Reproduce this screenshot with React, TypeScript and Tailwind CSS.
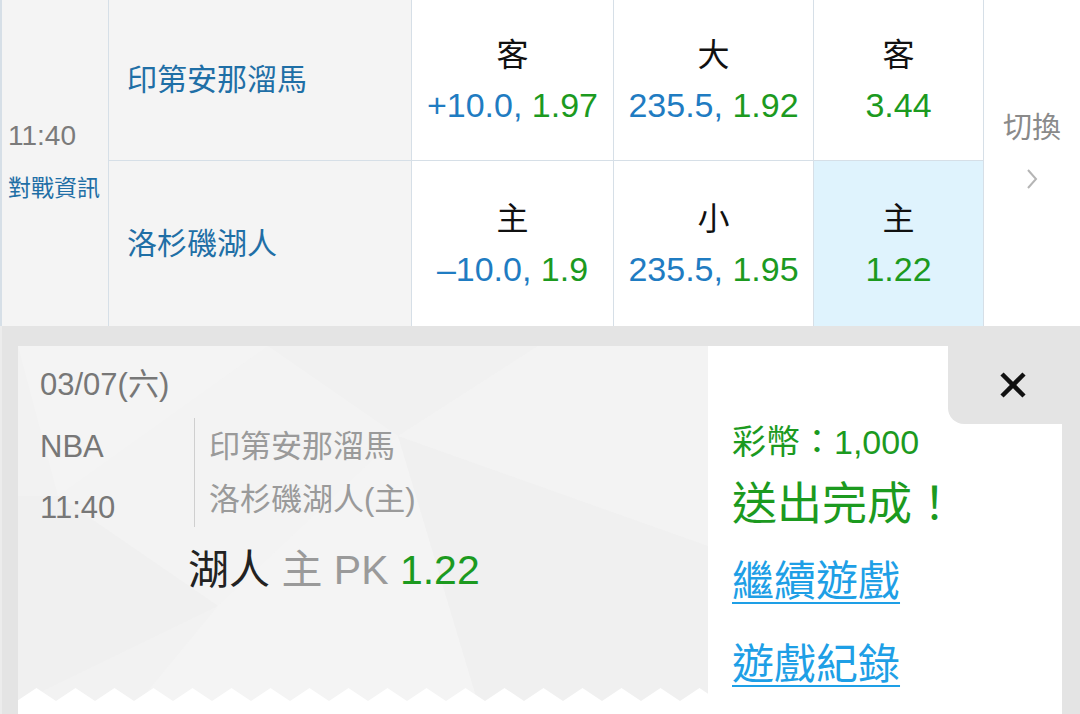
import React from 'react';

interface OddCell {
  label: string;
  line?: string;
  price: string;
  selected?: boolean;
}

interface MatchRow {
  team: string;
  cells: OddCell[];
}

const rows: MatchRow[] = [
  {
    team: '印第安那溜馬',
    cells: [
      { label: '客', line: '+10.0, ', price: '1.97' },
      { label: '大', line: '235.5, ', price: '1.92' },
      { label: '客', price: '3.44' },
    ],
  },
  {
    team: '洛杉磯湖人',
    cells: [
      { label: '主', line: '–10.0, ', price: '1.9' },
      { label: '小', line: '235.5, ', price: '1.95' },
      { label: '主', price: '1.22', selected: true },
    ],
  },
];

const cellWidths = ['w-[202px]', 'w-[200px]', 'w-[170px]'];

const CardPattern: React.FC = () => {
  // faint low-poly background + zigzag bottom edge of the ticket
  const zig = Array.from({ length: 19 }, (_, i) => {
    const x = i * 39 - 1;
    return `L${x},355 L${x + 19.5},342 L${x + 39},355`;
  }).join(' ');
  return (
    <svg className="absolute inset-0" width="690" height="357" viewBox="0 0 690 357">
      <rect width="690" height="357" fill="#f2f2f2" />
      <polygon points="0,0 250,0 40,150" fill="#f4f4f4" />
      <polygon points="250,0 520,0 380,90" fill="#f1f1f1" />
      <polygon points="40,150 250,0 380,90 200,260" fill="#f3f3f3" />
      <polygon points="0,150 40,150 200,260 0,357" fill="#f0f0f0" />
      <polygon points="200,260 380,90 460,357 120,357" fill="#f4f4f4" />
      <polygon points="380,90 520,0 690,0 690,200" fill="#f3f3f3" />
      <polygon points="380,90 690,200 690,357 460,357" fill="#f0f0f0" />
      <path d={`M-1,357 L-1,355 ${zig} L690,357 Z`} fill="#ffffff" />
    </svg>
  );
};

const App: React.FC = () => {
  return (
    <div className="w-[1080px] h-[714px] overflow-hidden bg-[#e4e4e4] font-['Liberation_Sans','Noto_Sans_CJK_TC',sans-serif]">
      {/* odds table */}
      <div className="flex h-[326px] bg-white">
        <div className="w-[109px] shrink-0 bg-[#f4f4f4] border-l-2 border-r border-[#d6dfe7] flex flex-col justify-center pl-[6px] pb-[6px]">
          <p className="text-[28px] leading-[34px] text-[#7b7b7b]">11:40</p>
          <p className="mt-[21px] text-[23px] leading-[28px] text-[#1f6fa6] whitespace-nowrap">對戰資訊</p>
        </div>

        <div className="w-[875px] shrink-0 flex flex-col">
          {rows.map((row, ri) => (
            <div
              key={row.team}
              className={`flex ${ri === 0 ? 'h-[161px] border-b border-[#d6dfe7]' : 'h-[165px]'}`}
            >
              <div className="w-[303px] shrink-0 bg-[#f4f4f4] border-r border-[#d6dfe7] flex items-center pl-[18px]">
                <span className="text-[30px] leading-[40px] text-[#1f6fa6]">{row.team}</span>
              </div>
              {row.cells.map((cell, ci) => (
                <div
                  key={ci}
                  className={`${cellWidths[ci]} shrink-0 border-r border-[#d6dfe7] flex flex-col items-center justify-center ${
                    cell.selected ? 'bg-[#dff3fd]' : 'bg-white'
                  }`}
                >
                  <span className="text-[32px] leading-[40px] text-[#111111]">{cell.label}</span>
                  <span className="mt-[10px] text-[34px] leading-[40px] whitespace-nowrap">
                    {cell.line && <span className="text-[#1f7cc2]">{cell.line}</span>}
                    <span className="text-[#1c9a1f]">{cell.price}</span>
                  </span>
                </div>
              ))}
            </div>
          ))}
        </div>

        <div className="flex-1 flex flex-col items-center justify-center pb-[26px] bg-white">
          <span className="text-[29px] leading-[34px] text-[#8a8a8a]">切換</span>
          <svg className="mt-[23px]" width="12" height="22" viewBox="0 0 12 22">
            <polyline points="2,2 10,11 2,20" fill="none" stroke="#b5b5b5" strokeWidth="2" />
          </svg>
        </div>
      </div>

      {/* bet confirmation card */}
      <div className="h-[388px] pt-[20px] pl-[16px] border-l-2 border-[#ececec] flex">
        <div className="w-[1044px] h-[368px] bg-white flex">
          <div className="w-[690px] h-[357px] shrink-0 relative overflow-hidden">
            <CardPattern />
            <div className="relative pl-[22px] pt-[21px]">
              <p className="text-[31px] leading-[36px] text-[#777777]">03/07(六)</p>
              <div className="mt-[15px] flex h-[109px]">
                <div className="w-[155px] shrink-0 border-r border-[#cfcfcf] pt-[11px]">
                  <p className="text-[31px] leading-[36px] text-[#777777]">NBA</p>
                  <p className="mt-[25px] text-[31px] leading-[36px] text-[#777777]">11:40</p>
                </div>
                <div className="pl-[14px] pt-[11px]">
                  <p className="text-[31px] leading-[36px] text-[#9a9a9a] whitespace-nowrap">印第安那溜馬</p>
                  <p className="mt-[17px] text-[31px] leading-[36px] text-[#9a9a9a] whitespace-nowrap">洛杉磯湖人(主)</p>
                </div>
              </div>
              <p className="mt-[20px] ml-[148px] text-[41px] leading-[46px] whitespace-nowrap">
                <span className="text-[#222222]">湖人 </span>
                <span className="text-[#9a9a9a]">主 PK </span>
                <span className="text-[#1c9a1f]">1.22</span>
              </p>
            </div>
          </div>

          <div className="flex-1 relative pl-[24px] pt-[76px]">
            <div className="absolute top-0 right-0 w-[114px] h-[78px] bg-[#e4e4e4] rounded-bl-[16px] flex items-center justify-center pl-[16px]">
              <svg width="28" height="28" viewBox="0 0 28 28">
                <line x1="3" y1="3" x2="25" y2="25" stroke="#111111" strokeWidth="4.5" />
                <line x1="25" y1="3" x2="3" y2="25" stroke="#111111" strokeWidth="4.5" />
              </svg>
            </div>
            <p className="text-[34px] leading-[40px] text-[#1c9a1f] whitespace-nowrap">彩幣：1,000</p>
            <p className="mt-[15px] text-[45px] leading-[56px] text-[#1c9a1f] whitespace-nowrap">送出完成！</p>
            <p className="mt-[24px] text-[42px] leading-[50px] text-[#1e9fe6] underline underline-offset-[6px] decoration-2 whitespace-nowrap">
              繼續遊戲
            </p>
            <p className="mt-[33px] text-[42px] leading-[50px] text-[#1e9fe6] underline underline-offset-[6px] decoration-2 whitespace-nowrap">
              遊戲紀錄
            </p>
          </div>
        </div>
      </div>
    </div>
  );
};

export default App;
